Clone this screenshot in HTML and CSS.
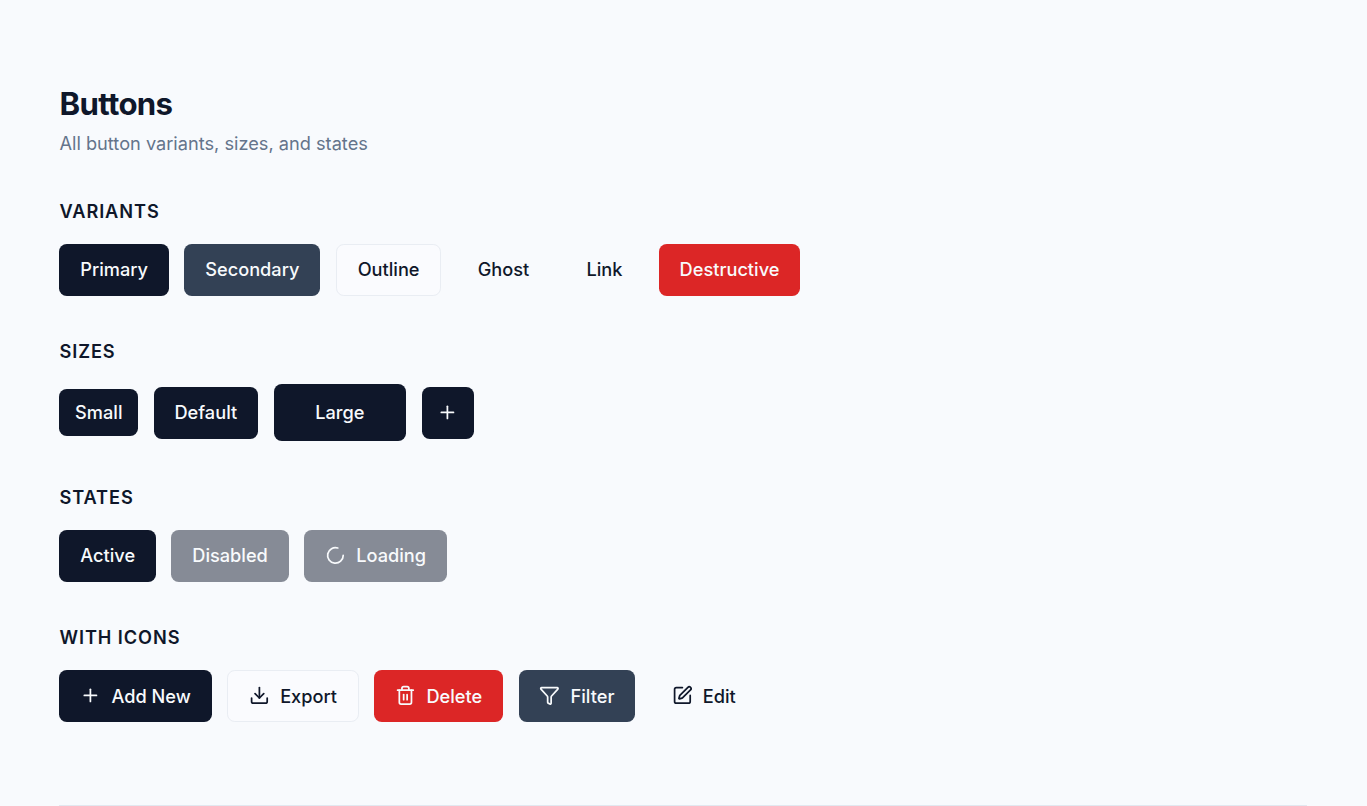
FILE: index.html

```html
<!DOCTYPE html>
<html lang="en">
<head>
  <meta charset="UTF-8">
  <title>Buttons</title>
  <link rel="stylesheet" href="styles.css">
</head>
<body>
  <main class="page">
    <h1>Buttons</h1>
    <p class="subtitle">All button variants, sizes, and states</p>

    <section>
      <h2>Variants</h2>
      <div class="row">
        <button class="btn primary">Primary</button>
        <button class="btn secondary">Secondary</button>
        <button class="btn outline">Outline</button>
        <button class="btn ghost">Ghost</button>
        <button class="btn ghost">Link</button>
        <button class="btn destructive">Destructive</button>
      </div>
    </section>

    <section>
      <h2>Sizes</h2>
      <div class="row sizes">
        <button class="btn primary small">Small</button>
        <button class="btn primary">Default</button>
        <button class="btn primary large">Large</button>
        <button class="btn primary square" aria-label="Add">
          <svg class="icon" viewBox="0 0 24 24"><path d="M5 12h14"/><path d="M12 5v14"/></svg>
        </button>
      </div>
    </section>

    <section>
      <h2>States</h2>
      <div class="row">
        <button class="btn primary">Active</button>
        <button class="btn primary disabled">Disabled</button>
        <button class="btn primary disabled">
          <svg class="icon" viewBox="0 0 24 24"><path d="M21 12a9 9 0 1 1-6.219-8.56"/></svg>
          Loading
        </button>
      </div>
    </section>

    <section>
      <h2>With Icons</h2>
      <div class="row">
        <button class="btn primary">
          <svg class="icon" viewBox="0 0 24 24"><path d="M5 12h14"/><path d="M12 5v14"/></svg>
          Add New
        </button>
        <button class="btn outline">
          <svg class="icon" viewBox="0 0 24 24"><path d="M12 15V3"/><path d="M21 15v4a2 2 0 0 1-2 2H5a2 2 0 0 1-2-2v-4"/><path d="m7 10 5 5 5-5"/></svg>
          Export
        </button>
        <button class="btn destructive">
          <svg class="icon" viewBox="0 0 24 24"><path d="M3 6h18"/><path d="M19 6v14c0 1-1 2-2 2H7c-1 0-2-1-2-2V6"/><path d="M8 6V4c0-1 1-2 2-2h4c1 0 2 1 2 2v2"/><path d="M10 11v6"/><path d="M14 11v6"/></svg>
          Delete
        </button>
        <button class="btn secondary">
          <svg class="icon" viewBox="0 0 24 24"><path d="M10 20a1 1 0 0 0 .553.895l2 1A1 1 0 0 0 14 21v-7a2 2 0 0 1 .517-1.341L21.74 4.67A1 1 0 0 0 21 3H3a1 1 0 0 0-.742 1.67l7.225 7.989A2 2 0 0 1 10 14z"/></svg>
          Filter
        </button>
        <button class="btn ghost">
          <svg class="icon" viewBox="0 0 24 24"><path d="M12 3H5a2 2 0 0 0-2 2v14a2 2 0 0 0 2 2h14a2 2 0 0 0 2-2v-7"/><path d="M18.375 2.625a1 1 0 0 1 3 3l-9.013 9.014a2 2 0 0 1-.853.505l-2.873.84a.5.5 0 0 1-.62-.62l.84-2.873a2 2 0 0 1 .506-.852z"/></svg>
          Edit
        </button>
      </div>
    </section>

    <hr class="divider">
  </main>
</body>
</html>
```

FILE: styles.css

```css
* {
  box-sizing: border-box;
}
html, body {
  height: 100%;
}
body {
  margin: 0;
  overflow: hidden;
  background: #f8fafd;
  color: #0f172a;
  font-family: Inter, "Noto Sans", sans-serif;
}
.page {
  padding: 84px 60px 0 59.49px;
}
h1 {
  margin: 0;
  font-size: 31.2px;
  line-height: 40px;
  font-weight: 700;
  letter-spacing: -0.65px;
}
.subtitle {
  margin: 7px 0 0;
  font-size: 18.2px;
  line-height: 24px;
  color: #64748b;
}
section {
  margin-top: 43.4px;
}
.subtitle + section {
  margin-top: 44px;
}
h2 {
  margin: 0 0 21px;
  font-size: 18.2px;
  line-height: 24px;
  font-weight: 600;
  letter-spacing: 0.91px;
  text-transform: uppercase;
}
.row {
  display: flex;
  align-items: center;
  gap: 15.6px;
}
.btn {
  display: inline-flex;
  align-items: center;
  justify-content: center;
  gap: 10.4px;
  height: 52px;
  padding: 0 20.8px 1.2px;
  border: 0;
  border-radius: 7.8px;
  font-family: inherit;
  font-size: 18.2px;
  font-weight: 500;
  color: #0f172a;
  background: transparent;
}
.primary {
  background: #0f172a;
  color: #f8fafc;
}
.secondary {
  background: #334155;
  color: #f8fafc;
}
.outline {
  background: #fafbfe;
  border: 1px solid #e9edf3;
}
.destructive {
  background: #dc2626;
  color: #f8fafc;
}
.disabled {
  background: #868b96;
}
.small {
  height: 47px;
  padding: 0 15.6px 1.2px;
}
.large {
  height: 57px;
  padding: 0 41.6px 1.2px;
}
.square {
  width: 52px;
  padding: 0;
}
.icon {
  width: 20.8px;
  height: 20.8px;
  fill: none;
  stroke: currentColor;
  stroke-width: 2;
  stroke-linecap: round;
  stroke-linejoin: round;
  flex: none;
}
.divider {
  margin: 82.8px 0 0 0;
  border: 0;
  border-top: 1px solid #e2e8f0;
}
```
